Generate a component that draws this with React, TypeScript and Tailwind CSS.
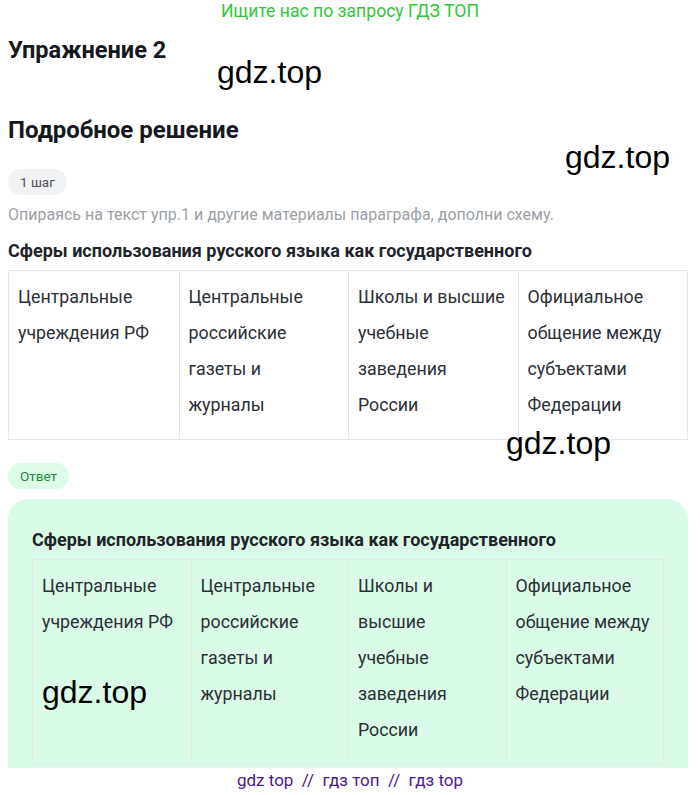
const items = [
  ['Центральные', 'учреждения РФ'],
  ['Центральные', 'российские', 'газеты и', 'журналы'],
  ['Школы и высшие', 'учебные', 'заведения', 'России'],
  ['Официальное', 'общение между', 'субъектами', 'Федерации'],
];

const answerItems = [
  ['Центральные', 'учреждения РФ'],
  ['Центральные', 'российские', 'газеты и', 'журналы'],
  ['Школы и', 'высшие', 'учебные', 'заведения', 'России'],
  ['Официальное', 'общение между', 'субъектами', 'Федерации'],
];

function Scheme({ data }: { data: string[][] }) {
  return (
    <div className="grid grid-cols-4 border border-[#e5e7eb]">
      {data.map((lines, i) => (
        <div key={i} className={'pl-[9px] pr-1 pt-2 pb-4 ' + (i > 0 ? 'border-l border-[#e5e7eb]' : '')}>
          {lines.map((l) => (
            <div key={l} className="text-[17.8px] leading-[36px] text-[#2b2f36] whitespace-nowrap">{l}</div>
          ))}
        </div>
      ))}
    </div>
  );
}

function Mark({ className }: { className: string }) {
  return (
    <div className={'absolute text-[32px] leading-none text-black font-["Liberation_Sans",Arial,sans-serif] ' + className}>
      gdz.top
    </div>
  );
}

export default function App() {
  return (
    <div className="relative w-[700px] h-[795px] overflow-hidden bg-white font-['Roboto','Liberation_Sans',sans-serif]">
      <div className="text-center text-[17.6px] leading-[22px] text-[#2fc83a]">Ищите нас по запросу ГДЗ ТОП</div>

      <div className="w-[696px] pl-2 pr-1">
        <div className="w-[680px]">
          <h1 className="mt-[14px] text-[23.6px] leading-[28px] font-bold text-[#15181d]">Упражнение 2</h1>
          <h2 className="mt-[52px] text-[24px] leading-[28px] font-bold text-[#15181d]">Подробное решение</h2>

          <div className="mt-[25px] flex h-[26px] w-fit items-center rounded-full bg-[#f1f2f4] px-3 text-[13.5px] text-[#4b5058]">1 шаг</div>

          <p className="mt-[10px] text-[16px] leading-[20px] text-[#9aa0a6]">
            Опираясь на текст упр.1 и другие материалы параграфа, дополни схему.
          </p>

          <h3 className="mt-[14px] text-[18px] leading-[24px] font-bold text-[#1f242b]">
            Сферы использования русского языка как государственного
          </h3>
          <div className="mt-[7px]">
            <Scheme data={items} />
          </div>

          <div className="mt-[23px] flex h-[26px] w-fit items-center rounded-full bg-[#dcfce7] px-3 text-[13.5px] text-[#23873f]">Ответ</div>

          <div className="mt-[10px] h-[270px] rounded-t-[20px] bg-[#dafbe7] px-6 pt-[29px]">
            <h3 className="text-[18px] leading-[24px] font-bold text-[#1f242b]">
              Сферы использования русского языка как государственного
            </h3>
            <div className="mt-[7px]">
              <Scheme data={answerItems} />
            </div>
          </div>
        </div>
      </div>

      <div className="absolute left-0 right-0 top-[768px] h-[27px] bg-white text-center text-[17px] leading-[24px] text-[#4b1a8c] whitespace-pre">
        {'gdz top  //  гдз топ  //  гдз top'}
      </div>

      <Mark className="left-[217px] top-[56px]" />
      <Mark className="left-[565px] top-[141px]" />
      <Mark className="left-[506px] top-[427px]" />
      <Mark className="left-[42px] top-[676px]" />
    </div>
  );
}
